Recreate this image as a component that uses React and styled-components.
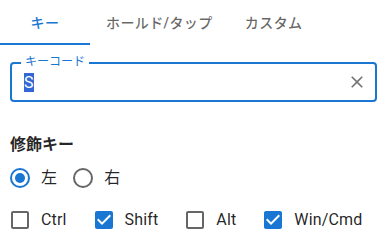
import React from "react";
import styled, { createGlobalStyle } from "styled-components";

const GlobalStyle = createGlobalStyle`
  body {
    margin: 0;
    background: #fff;
    font-family: Roboto, "Noto Sans CJK JP", sans-serif;
    color: rgba(0, 0, 0, 0.87);
  }
`;

const blue = "#1976d2";

const TabBar = styled.div`
  display: flex;
  height: 45px;
`;

const Tab = styled.div`
  box-sizing: border-box;
  min-width: 90px;
  padding: 0 16px;
  display: flex;
  align-items: center;
  justify-content: center;
  font-size: 14px;
  font-weight: 500;
  letter-spacing: 0.4px;
  color: ${(p) => (p.active ? blue : "rgba(0, 0, 0, 0.6)")};
  border-bottom: 2px solid ${(p) => (p.active ? blue : "transparent")};
`;

const Panel = styled.div`
  padding: 0 12px 0 10px;
`;

const Field = styled.div`
  position: relative;
  box-sizing: border-box;
  margin-top: 17px;
  height: 40px;
  border: 2px solid ${blue};
  border-radius: 4px;
  display: flex;
  align-items: center;
  padding: 0 8px 0 12px;
`;

const FieldLabel = styled.span`
  position: absolute;
  top: -9px;
  left: 9px;
  padding: 0 4px;
  background: #fff;
  font-size: 12px;
  line-height: 14px;
  color: ${blue};
`;

const Value = styled.div`
  flex: 1;
  font-size: 16px;
  line-height: 23px;
  margin-top: 1px;
`;

const Selected = styled.span`
  background: #3367d6;
  color: #fff;
`;

const ClearIcon = styled.svg`
  width: 20px;
  height: 20px;
  fill: rgba(0, 0, 0, 0.54);
`;

const SectionTitle = styled.div`
  margin-top: 31px;
  font-size: 16px;
  line-height: 24px;
  font-weight: 700;
`;

const Row = styled.div`
  display: flex;
  align-items: center;
  height: 40px;
  margin-top: ${(p) => p.gap || 0}px;
`;

const Control = styled.label`
  display: inline-flex;
  align-items: center;
  margin-left: -11px;
  margin-right: ${(p) => p.spacing}px;
  font-size: 16px;
  letter-spacing: 0.15px;
  line-height: 24px;
`;

const IconBox = styled.span`
  display: inline-flex;
  padding: 9px;

  svg {
    width: 24px;
    height: 24px;
  }
`;

const RadioIcon = ({ checked }) => (
  <IconBox>
    <svg viewBox="0 0 24 24">
      <circle
        cx="12"
        cy="12"
        r="9"
        fill="none"
        strokeWidth="2"
        stroke={checked ? blue : "rgba(0,0,0,0.6)"}
      />
      {checked && <circle cx="12" cy="12" r="5" fill={blue} />}
    </svg>
  </IconBox>
);

const CheckIcon = ({ checked }) => (
  <IconBox>
    {checked ? (
      <svg viewBox="0 0 24 24">
        <rect x="5" y="6" width="14" height="12" fill="#fff" />
        <path
          fill={blue}
          d="M19 3H5c-1.11 0-2 .9-2 2v14c0 1.1.89 2 2 2h14c1.11 0 2-.9 2-2V5c0-1.1-.89-2-2-2zm-9 14l-5-5 1.41-1.41L10 14.17l7.59-7.59L19 8l-9 9z"
        />
      </svg>
    ) : (
      <svg viewBox="0 0 24 24">
        <path
          fill="rgba(0,0,0,0.6)"
          d="M19 5v14H5V5h14m0-2H5c-1.1 0-2 .9-2 2v14c0 1.1.9 2 2 2h14c1.1 0 2-.9 2-2V5c0-1.1-.9-2-2-2z"
        />
      </svg>
    )}
  </IconBox>
);

const modifiers = [
  { name: "Ctrl", on: false },
  { name: "Shift", on: true },
  { name: "Alt", on: false },
  { name: "Win/Cmd", on: true },
];

const App = () => {
  return (
    <>
      <GlobalStyle />
      <TabBar>
        <Tab active>キー</Tab>
        <Tab>ホールド/タップ</Tab>
        <Tab>カスタム</Tab>
      </TabBar>
      <Panel>
        <Field>
          <FieldLabel>キーコード</FieldLabel>
          <Value>
            <Selected>S</Selected>
          </Value>
          <ClearIcon viewBox="0 0 24 24">
            <path d="M19 6.41 17.59 5 12 10.59 6.41 5 5 6.41 10.59 12 5 17.59 6.41 19 12 13.41 17.59 19 19 17.59 13.41 12z" />
          </ClearIcon>
        </Field>

        <SectionTitle>修飾キー</SectionTitle>
        <Row gap={1}>
          <Control spacing={16}>
            <RadioIcon checked />
            左
          </Control>
          <Control spacing={16}>
            <RadioIcon />
            右
          </Control>
        </Row>
        <Row gap={2}>
          {modifiers.map((m) => (
            <Control key={m.name} spacing={27}>
              <CheckIcon checked={m.on} />
              {m.name}
            </Control>
          ))}
        </Row>
      </Panel>
    </>
  );
};

export default App;
